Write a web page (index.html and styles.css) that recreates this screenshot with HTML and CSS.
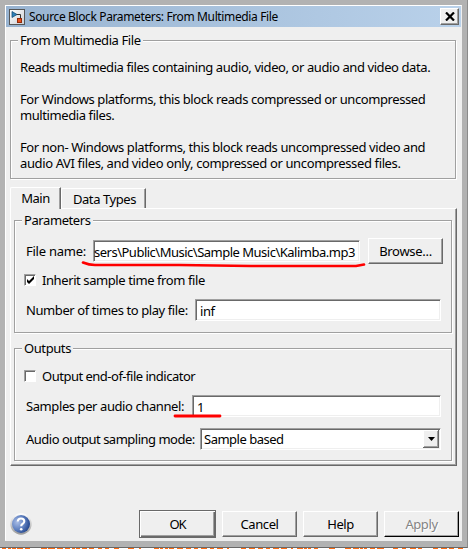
FILE: index.html
```html
<!DOCTYPE html>
<html lang="en">
<head>
<meta charset="utf-8">
<title>Source Block Parameters: From Multimedia File</title>
<link rel="stylesheet" href="styles.css">
</head>
<body>
<div class="frame">
<main class="dialog">
  <header class="titlebar">
    <svg class="app-icon" width="16" height="16" viewBox="0 0 16 16">
      <defs><linearGradient id="ic" x1="0" y1="0" x2="1" y2="1"><stop offset="0" stop-color="#fff"/><stop offset="1" stop-color="#c9cdd3"/></linearGradient></defs>
      <rect x=".5" y=".5" width="15" height="15" fill="url(#ic)" stroke="#555"/>
      <path d="M7 5.500h4.500V9" fill="none" stroke="#333"/>
      <path d="M3 2.500v6L8 5.500z" fill="#2d80b8" stroke="#174f78" stroke-width=".8"/>
      <rect x="8.500" y="9.500" width="4" height="4" fill="#e8501c" stroke="#922908"/>
    </svg>
    <h1 class="title">Source Block Parameters: From Multimedia File</h1>
    <button class="close" aria-label="Close"><svg width="10" height="9" viewBox="0 0 10 9"><path d="M1 .5l8 8M9 .5l-8 8" stroke="#000" stroke-width="2.200"/></svg></button>
  </header>
  <section class="group about">
    <h2 class="legend">From Multimedia File</h2>
    <p>Reads multimedia files containing audio, video, or audio and video data.</p>
    <p>For Windows platforms, this block reads compressed or uncompressed<br>multimedia files.</p>
    <p>For non- Windows platforms, this block reads uncompressed video and<br><span class="wider">audio AVI files, and video only, compressed or uncompressed files.</span></p>
  </section>
  <nav class="tabs"><div class="tab active">Main</div><div class="tab types">Data Types</div></nav>
  <div class="panel">
    <section class="group params">
      <h2 class="legend">Parameters</h2>
      <div class="row file"><label>File name:</label><div class="input path"><span>sers\Public\Music\Sample Music\Kalimba.mp3</span></div><button class="btn browse">Browse...</button>
        <svg class="mark mark-file" width="286" height="10" viewBox="0 0 286 10"><path d="M2 2.500Q8 5 14 5L98 5L170 6L275 6L283 4.500" fill="none" stroke="#f00" stroke-width="2.600" stroke-linecap="round" stroke-linejoin="round"/></svg>
      </div>
      <div class="row check"><span class="box"><svg width="9" height="9" viewBox="0 0 9 9"><path d="M1 3v3l2 2l5-5V0L3 5z"/></svg></span><span>Inherit sample time from file</span></div>
      <div class="row times"><label>Number of times to play file:</label><div class="input">inf</div></div>
    </section>
    <section class="group outputs">
      <h2 class="legend">Outputs</h2>
      <div class="row check"><span class="box"></span><span class="tight">Output end-of-file indicator</span></div>
      <div class="row samples"><label>Samples per audio channel:</label><div class="input">1</div>
        <svg class="mark mark-samples" width="50" height="5" viewBox="0 0 50 5"><path d="M2 2H47" stroke="#f00" stroke-width="2.800" stroke-linecap="round"/></svg>
      </div>
      <div class="row mode"><label class="tight">Audio output sampling mode:</label><div class="input select"><span class="tight">Sample based</span><i class="drop"><svg width="7" height="4" viewBox="0 0 7 4"><path d="M0 0h7L3.500 4z"/></svg></i></div></div>
    </section>
  </div>
  <footer class="footer">
    <svg class="help" width="22" height="22" viewBox="0 0 22 22">
      <defs><linearGradient id="rim" x1="0" y1="0" x2="0" y2="1"><stop offset="0" stop-color="#fff"/><stop offset="1" stop-color="#999"/></linearGradient><radialGradient id="ball" cx=".3" cy=".4" r=".75"><stop offset="0" stop-color="#a9bde6"/><stop offset=".55" stop-color="#5f80c0"/><stop offset="1" stop-color="#1b3e86"/></radialGradient></defs>
      <circle cx="11" cy="11" r="10.700" fill="url(#rim)"/><circle cx="11" cy="11" r="9" fill="url(#ball)"/>
      <path d="M7.700 8.500Q8 5.500 11 5.500Q14.300 5.500 14.300 8.300Q14.300 10 12.500 11Q11.200 11.700 11.200 13.300" fill="none" stroke="#fff" stroke-width="2.100"/><circle cx="11.200" cy="16.200" r="1.300" fill="#fff"/>
    </svg>
    <button class="btn ok">OK</button><button class="btn cancel">Cancel</button><button class="btn">Help</button><button class="btn apply">Apply</button>
  </footer>
</main>
</div>
<svg class="behind" width="468" height="1" viewBox="0 0 468 1"><path stroke="#ff6a10" d="M2 .5H6M8 .5H11M12 .5H16M17 .5H23M25 .5H30M41 .5H47M48 .5H55M57 .5H63M65 .5H70M72 .5H75M76 .5H80M82 .5H87M89 .5H94M98 .5H102M105 .5H109M114 .5H119M128 .5H134M139 .5H141M154 .5H159M160 .5H163M165 .5H168M169 .5H174M177 .5H183M186 .5H191M194 .5H198M201 .5H207M210 .5H214M217 .5H223M227 .5H229M241 .5H246M249 .5H255M258 .5H263M266 .5H270M273 .5H279M281 .5H287M291 .5H293M297 .5H303M304 .5H307M308 .5H311M314 .5H318M329 .5H335M345 .5H351M353 .5H359M360 .5H363M364 .5H367M370 .5H375M377 .5H384M393 .5H398M402 .5H406M410 .5H416M418 .5H422M433 .5H438M441 .5H447M449 .5H454M458 .5H463"/></svg>
</body>
</html>
```
FILE: styles.css
```css
* { box-sizing: border-box; margin: 0; padding: 0; }
body { width: 468px; height: 549px; overflow: hidden; background: #fff; color: #000; font: 13px/16px "Noto Sans", Tahoma, sans-serif; letter-spacing: -.41px; white-space: nowrap; }
.frame { height: 548px; padding: 5px; background: #b2b2b2; border-right: 1px solid #8b8b8b; border-bottom: 1px solid #696969; }
.dialog { width: 457px; height: 536px; background: #efefef; border: 1px solid #fff; border-right-color: #efefef; border-bottom-color: #efefef; }
.titlebar { height: 21px; display: flex; align-items: center; padding: 0 2px 0 3px; background: linear-gradient(90deg, #99b4d1, #b9d1ea); }
.app-icon { display: block; }
.title { font: 12px/16px "Noto Sans", sans-serif; letter-spacing: -.37px; margin-left: 4px; }
.close { margin-left: auto; width: 19px; height: 17px; display: flex; align-items: center; justify-content: center; background: #efefef; border: 1px solid; border-color: #fff #696969 #696969 #fff; box-shadow: inset -1px -1px #a0a0a0; }
h2 { font: inherit; }
.wider { letter-spacing: -.37px; }
.tight { letter-spacing: -.5px; }
.group { border: 1px solid #a0a0a0; box-shadow: 1px 1px #fff, inset 1px 1px #fff; }
.legend { width: max-content; height: 16px; margin-top: -9px; background: #efefef; padding: 0 2px; }
.about { width: 446px; height: 139px; margin: 13px 0 0 4px; padding-left: 9px; }
.about .legend { margin-left: -2px; margin-bottom: 11px; }
.about p { margin-bottom: 16px; }
.tabs { display: flex; align-items: flex-end; height: 21px; margin: 8px 0 0 4px; }
.tab { height: 20px; line-height: 20px; border: 1px solid #fff; border-right: 1px solid #696969; border-bottom: 0; box-shadow: inset -1px 0 #a0a0a0; text-align: center; width: 85px; border-top-left-radius: 2px; }
.active { height: 22px; width: 51px; margin-bottom: -1px; background: #efefef; position: relative; letter-spacing: -.5px; }
.types { padding-left: 2px; }
.panel { width: 447px; height: 258px; margin-left: 4px; border: 1px solid; border-color: #fff #696969 #696969 #fff; box-shadow: inset -1px -1px #a0a0a0; padding: 11px 3px; }
.panel .group { width: 438px; height: 113px; padding-left: 9px; }
.panel .outputs { margin-top: 15px; }
.panel .legend { margin-left: -2px; }
.row { display: flex; align-items: center; position: relative; padding-left: 2px; }
.check { padding-left: 0; height: 16px; }
.input { height: 22px; padding: 1px 0 0 4px; line-height: 20px; background: #fff; border: 1px solid; border-color: #a0a0a0 #fff #fff #a0a0a0; box-shadow: inset 1px 1px #696969, inset -1px -1px #efefef; margin-left: auto; }
.row .input { margin-right: 10px; }
.file { height: 26px; margin-top: 10px; }
.file label { letter-spacing: -.25px; }
.row .path { width: 267px; margin: 0 8px 0 auto; padding-left: 0; overflow: hidden; letter-spacing: -.5px; }
.browse { width: 75px; height: 26px; margin-right: 8px; }
.params .check { margin-top: 8px; }
.box { width: 12px; height: 12px; display: flex; justify-content: center; align-items: center; background: #fff; border: 1px solid; border-color: #a0a0a0 #fff #fff #a0a0a0; box-shadow: inset 1px 1px #696969; margin-right: 6px; }
.times { margin-top: 11px; }
.times .input { width: 246px; }
.outputs .check { margin-top: 12px; }
.samples { margin-top: 11px; }
.samples .input { width: 249px; }
.mode { margin-top: 11px; }
.row .select { width: 241px; display: flex; justify-content: space-between; padding: 1px 1px 1px 3px; line-height: 19px; }
.drop { width: 16px; height: 18px; background: #efefef; display: flex; align-items: center; justify-content: center; box-shadow: inset -1px -1px #696969, inset 1px 1px #fff, inset -2px -2px #a0a0a0; }
.mark { position: absolute; }
.mark-file { left: 57px; top: 22px; }
.mark-samples { left: 149px; top: 19px; }
.btn { font: inherit; letter-spacing: -.41px; text-align: center; background: #efefef; border: 1px solid; border-color: #fff #696969 #696969 #fff; box-shadow: inset -1px -1px #a0a0a0; }
.row .browse { letter-spacing: -.3px; }
.footer { display: flex; align-items: center; margin: 43px 2px 0 4px; height: 29px; }
.footer .btn { width: 75px; height: 26px; margin-left: 6px; }
.footer .ok { width: 77px; height: 28px; margin-left: 107px; border-color: #696969; letter-spacing: -1px; box-shadow: inset 1px 1px #fff, inset -1px -1px #696969, inset -2px -2px #a0a0a0; }
.footer .apply { color: #838383; text-shadow: 1px 1px #fff; border-right-color: #000; border-bottom-color: #000; }
.behind { display: block; }
```
